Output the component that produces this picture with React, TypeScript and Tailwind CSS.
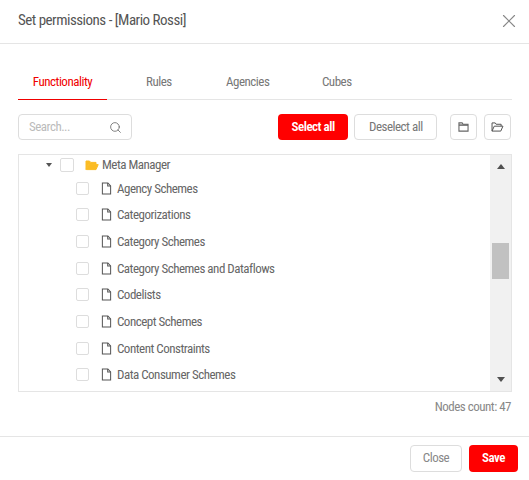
import { Search, X } from 'lucide-react'

const children = [
  'Agency Schemes',
  'Categorizations',
  'Category Schemes',
  'Category Schemes and Dataflows',
  'Codelists',
  'Concept Schemes',
  'Content Constraints',
  'Data Consumer Schemes',
]

const tabs = [
  { label: 'Functionality', cls: 'w-[89px] justify-center text-[#f00000] border-b border-[#f00000]' },
  { label: 'Rules', cls: 'w-[119px] pl-[39px] text-[#777]' },
  { label: 'Agencies', cls: 'w-[96px] text-[#777]' },
  { label: 'Cubes', cls: 'w-[80px] text-[#777]' },
]

function FileIcon() {
  return (
    <svg viewBox="0 0 12 14" className="w-[11px] h-[13px] text-[#555]" fill="none" stroke="currentColor" strokeWidth="1.1">
      <path d="M1.5 1h6l3 3.2V13h-9z" />
      <path d="M7.3 1v3.4h3.2" />
    </svg>
  )
}

function OpenFolder({ color, className }: { color: string; className: string }) {
  return (
    <svg viewBox="0 0 14 12" className={className}>
      <path d="M1 10.5V2h3.5l1.2 1.4H11v1.6H3.4L1 10.5z" fill={color} stroke={color} strokeWidth="1" strokeLinejoin="round" />
      <path d="M3.6 5.6h9.6l-2.2 5H1.4z" fill={color} stroke={color} strokeWidth="1" strokeLinejoin="round" />
    </svg>
  )
}

export default function App() {
  return (
    <div className="w-[529px] h-[480px] bg-white overflow-hidden text-[13px] tracking-[-0.5px] text-[#666] font-['Roboto',sans-serif] font-stretch-condensed">
      {/* header */}
      <div className="h-11 flex items-center justify-between pl-[18px] pr-[9px] pb-[2px] border-b border-[#e5e5e5]">
        <span className="text-[15px] text-[#555]">Set permissions - [Mario Rossi]</span>
        <X className="w-[22px] h-[22px] text-[#888]" strokeWidth={1.25} />
      </div>

      <div className="px-[18px]">
        {/* tabs */}
        <div className="mt-[17px] h-[39px] flex w-[494px] border-b border-[#e5e5e5]">
          {tabs.map((t) => (
            <div key={t.label} className={`h-[39px] pt-[3px] flex items-center ${t.cls}`}>
              {t.label}
            </div>
          ))}
        </div>

        {/* toolbar */}
        <div className="mt-[14px] h-[26px] flex items-center">
          <div className="w-[114px] h-[26px] border border-[#ddd] rounded flex items-center justify-between pl-[10px] pr-[9px]">
            <span className="text-[#bbb]">Search...</span>
            <Search className="w-[13px] h-[13px] text-[#666]" strokeWidth={1.5} />
          </div>
          <button className="ml-[146px] w-[71px] h-[26px] rounded bg-[#ff0000] text-white font-semibold">Select all</button>
          <button className="ml-[6px] w-[83px] h-[26px] rounded border border-[#ddd] text-[#777]">Deselect all</button>
          <button className="ml-[13px] w-[27px] h-[26px] rounded border border-[#ddd] flex items-center justify-center">
            <svg viewBox="0 0 12 11" className="w-[11px] h-[10px]" fill="none" stroke="#666" strokeWidth="1.2">
              <path d="M1 10V1h3.5l1 1.5H11V10z" />
              <path d="M1 3.4h10" strokeWidth="1.6" />
            </svg>
          </button>
          <button className="ml-[7px] w-[27px] h-[26px] rounded border border-[#ddd] flex items-center justify-center">
            <svg viewBox="0 0 14 11" className="w-[13px] h-[10px]" fill="none" stroke="#555" strokeWidth="1.1">
              <path d="M1 10V1h3.5l1 1.5H11v2" />
              <path d="M1 10l2.4-5.4H13L10.6 10z" />
            </svg>
          </button>
        </div>

        {/* tree */}
        <div className="mt-[14px] w-[494px] h-[238px] border border-[#e5e5e5] flex overflow-hidden">
          <div className="flex-1 overflow-hidden">
            <div className="h-5 flex items-center">
              <span className="ml-[27px] w-0 h-0 border-x-[3.5px] border-x-transparent border-t-[4px] border-t-[#555]" />
              <span className="ml-[8px] w-[14px] h-[14px] border border-[#ddd] rounded-[2px]" />
              <OpenFolder color="#fbbc24" className="ml-[11px] w-[14px] h-[12px]" />
              <span className="ml-[3px]">Meta Manager</span>
            </div>
            <div>
              {children.map((c) => (
                <div key={c} className="h-[26.67px] flex items-center">
                  <span className="ml-[57px] w-[13px] h-[13px] border border-[#ddd] rounded-[2px]" />
                  <span className="ml-[12px] flex"><FileIcon /></span>
                  <span className="ml-[5px]">{c}</span>
                </div>
              ))}
            </div>
          </div>
          <div className="w-[21px] bg-[#f1f1f1] flex flex-col items-center justify-between py-[9px] relative">
            <span className="w-0 h-0 border-x-[4.5px] border-x-transparent border-b-[5px] border-b-[#505050]" />
            <span className="absolute top-[88px] left-[2px] w-[17px] h-[36px] bg-[#c1c1c1]" />
            <span className="w-0 h-0 border-x-[4.5px] border-x-transparent border-t-[5px] border-t-[#505050]" />
          </div>
        </div>

        <div className="mt-[5px] text-right text-[#888]">Nodes count: 47</div>
      </div>

      {/* footer */}
      <div className="mt-[19px] border-t border-[#e5e5e5] h-11 flex items-center justify-end gap-[7px] pr-[11px]">
        <button className="w-[52px] h-[27px] rounded border border-[#ddd] text-[#888]">Close</button>
        <button className="w-[49px] h-[27px] rounded bg-[#ff0000] text-white font-semibold">Save</button>
      </div>
    </div>
  )
}
